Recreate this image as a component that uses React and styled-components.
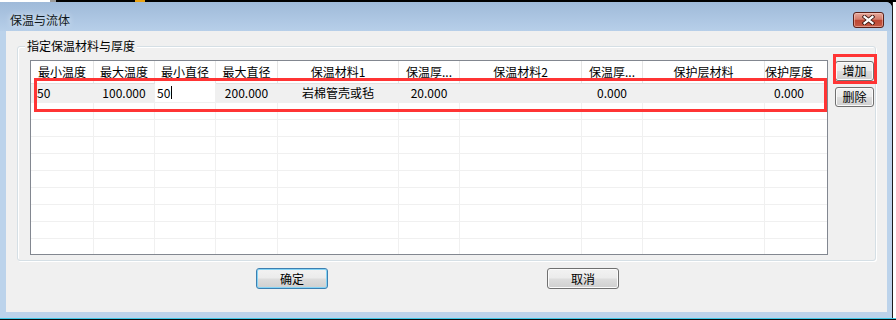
import React from "react";
import styled, { createGlobalStyle } from "styled-components";

const GlobalStyle = createGlobalStyle`
  html, body { margin: 0; padding: 0; background: #000; }
  body { font-family: "Noto Sans CJK SC", "Liberation Sans", sans-serif; font-size: 12px; color: #000; }
`;

const Screen = styled.div`
  position: relative;
  width: 896px;
  height: 320px;
  overflow: hidden;
  display: flex;
  flex-direction: column;
  background: #000;
`;

const TopStrip = styled.div`
  height: 2px;
  flex: none;
  background: linear-gradient(to right, #fff 0 50px, #9a9a9a 50px 56px, #000 56px 135px, #e9a317 135px 145px, #000 145px);
`;

const MiddleRow = styled.div`
  display: flex;
  flex: none;
  height: 316px;
`;

const RightStrip = styled.div`
  flex: 1;
  background: #fff;
  border-left: 1px solid #1b1b1b;
`;

const BottomStrip = styled.div`
  flex: 1;
  background: #0c0c0c;
  border-top: 1px solid #3fc7e6;
`;

const Window = styled.div`
  width: 892px;
  flex: none;
  display: flex;
  flex-direction: column;
  background: #bcd3eb;
  border-top-right-radius: 6px;
`;

const TitleBar = styled.div`
  height: 29px;
  flex: none;
  display: flex;
  align-items: flex-start;
  justify-content: space-between;
  padding: 10px 8px 0 10px;
  box-sizing: border-box;
  background: linear-gradient(#9fbad9, #b7cfe9);
  border-top-right-radius: 6px;
`;

const Title = styled.div`
  margin-top: 1px;
  line-height: 14px;
  font-size: 12px;
  color: #101820;
  text-shadow: 0 0 6px rgba(255, 255, 255, 0.9);
`;

const CloseButton = styled.div`
  width: 31px;
  height: 16px;
  box-sizing: border-box;
  border: 1px solid #5b2018;
  border-radius: 3px;
  background: linear-gradient(#e6a99c 0%, #d47c6b 45%, #bd4632 52%, #c65a45 100%);
  box-shadow: inset 0 0 0 1px rgba(255, 220, 210, 0.45);
  display: flex;
  align-items: center;
  justify-content: center;
`;

const Client = styled.div`
  margin: 0 5px 6px 6px;
  height: 281px;
  flex: none;
  background: #f0f0f0;
  display: flex;
  flex-direction: column;
`;

const GroupBox = styled.div`
  position: relative;
  margin: 15px 11px 0 11px;
  height: 215px;
  box-sizing: border-box;
  border: 1px solid #d5dfe5;
  border-radius: 3px;
  box-shadow: inset 1px 1px 0 #fff, 1px 1px 0 #fff;
  padding: 13px 1px 0 12px;
  display: flex;
  align-items: flex-start;
  gap: 7px;
`;

const GroupTitle = styled.div`
  position: absolute;
  top: -8px;
  left: 7px;
  padding: 0 2px;
  background: #f0f0f0;
  line-height: 14px;
`;

const Table = styled.div`
  width: 798px;
  height: 195px;
  flex: none;
  box-sizing: border-box;
  border: 1px solid #828790;
  background: #fff;
  overflow: hidden;
`;

const Row = styled.div`
  display: grid;
  grid-template-columns: ${(p) => p.$cols};
  height: ${(p) => p.$h}px;
  box-sizing: border-box;
  border-bottom: 1px solid ${(p) => p.$line};
  background: ${(p) => p.$bg || "#fff"};
`;

const Cell = styled.div`
  display: flex;
  align-items: center;
  justify-content: ${(p) => (p.$left ? "flex-start" : "center")};
  padding: ${(p) => (p.$left ? "0 0 0 6px" : p.$padRight ? `0 ${p.$padRight}px 0 0` : "0")};
  border-right: 1px solid ${(p) => p.$line};
  white-space: nowrap;
  overflow: hidden;
  line-height: 14px;
  &:last-child { border-right: none; }
`;

const EditCell = styled.div`
  display: flex;
  align-items: flex-start;
  padding: 3px 0 0 2px;
  margin-top: -1px;
  background: #fff;
  border-right: 1px solid #f0f0f0;
  line-height: 14px;
`;

const Caret = styled.span`
  display: inline-block;
  width: 1px;
  height: 13px;
  margin-left: 1px;
  background: #000;
`;

const SideButtons = styled.div`
  margin-top: 1px;
  display: flex;
  flex-direction: column;
  gap: 6px;
`;

const Button = styled.div`
  width: ${(p) => p.$w}px;
  height: ${(p) => p.$h}px;
  box-sizing: border-box;
  border: 1px solid ${(p) => (p.$default ? "#3c7fb1" : "#707070")};
  border-radius: 3px;
  background: linear-gradient(#f2f2f2 0%, #ebebeb 49%, #dddddd 51%, #cfcfcf 100%);
  box-shadow: inset 0 0 0 1px ${(p) => (p.$default ? "#86d4f5" : "#fbfbfb")};
  display: flex;
  align-items: center;
  justify-content: center;
  line-height: 14px;
  font-size: 12px;
`;

const Footer = styled.div`
  display: flex;
  margin-top: 7px;
  padding-left: 250px;
  gap: 219px;
`;

const Highlight = styled.div`
  position: absolute;
  left: ${(p) => p.$x}px;
  top: ${(p) => p.$y}px;
  width: ${(p) => p.$w}px;
  height: ${(p) => p.$h}px;
  box-sizing: border-box;
  border: 3px solid #ff3434;
  pointer-events: none;
`;

const colWidths = [63, 61, 61, 62, 121, 61, 122, 61, 122, 62];
const cols = colWidths.map((w) => `${w}px`).join(" ");
const headers = ["最小温度", "最大温度", "最小直径", "最大直径", "保温材料1", "保温厚...", "保温材料2", "保温厚...", "保护层材料", "保护厚度"];
const data = ["50", "100.000", null, "200.000", "岩棉管壳或毡", "20.000", "", "0.000", "", "0.000"];

function CloseX() {
  return (
    <svg width="13" height="10" viewBox="0 0 13 10">
      <path d="M2.5 1.8 L10.5 8.2 M10.5 1.8 L2.5 8.2" stroke="#3a1712" strokeWidth="4" strokeLinecap="square" />
      <path d="M2.5 1.8 L10.5 8.2 M10.5 1.8 L2.5 8.2" stroke="#fff" strokeWidth="2.2" strokeLinecap="square" />
    </svg>
  );
}

export default function App() {
  return (
    <>
      <GlobalStyle />
      <Screen>
        <TopStrip />
        <MiddleRow>
          <Window>
            <TitleBar>
              <Title>保温与流体</Title>
              <CloseButton>
                <CloseX />
              </CloseButton>
            </TitleBar>
            <Client>
              <GroupBox>
                <GroupTitle>指定保温材料与厚度</GroupTitle>
                <Table>
                  <Row $cols={cols} $h={23} $line="#e2e2e2">
                    {headers.map((h, i) => (
                      <Cell key={i} $line="#e5e5e5" $padRight={i === 9 ? 14 : 0}>
                        {h}
                      </Cell>
                    ))}
                  </Row>
                  <Row $cols={cols} $h={19} $line="#f0f0f0" $bg="#f0f0f0">
                    {data.map((d, i) =>
                      d === null ? (
                        <EditCell key={i}>
                          50
                          <Caret />
                        </EditCell>
                      ) : (
                        <Cell key={i} $line="#f0f0f0" $left={i === 0} $padRight={i === 9 ? 14 : 0}>
                          {d}
                        </Cell>
                      )
                    )}
                  </Row>
                  {Array.from({ length: 9 }).map((_, r) => (
                    <Row key={r} $cols={cols} $h={17} $line="#f0f0f0">
                      {colWidths.map((_, i) => (
                        <Cell key={i} $line="#f0f0f0" />
                      ))}
                    </Row>
                  ))}
                </Table>
                <SideButtons>
                  <Button $w={39} $h={20}>增加</Button>
                  <Button $w={39} $h={20}>删除</Button>
                </SideButtons>
              </GroupBox>
              <Footer>
                <Button $w={72} $h={21} $default>确定</Button>
                <Button $w={72} $h={21}>取消</Button>
              </Footer>
            </Client>
          </Window>
          <RightStrip />
        </MiddleRow>
        <BottomStrip />
        <Highlight $x={34} $y={78} $w={793} $h={34} />
        <Highlight $x={833} $y={54} $w={44} $h={30} />
      </Screen>
    </>
  );
}
